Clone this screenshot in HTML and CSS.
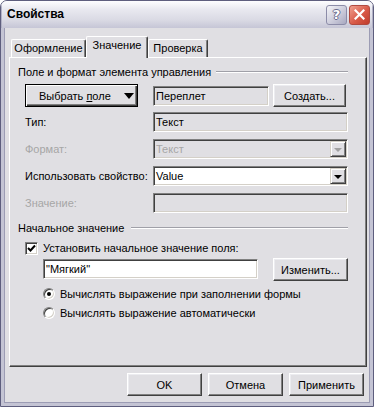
FILE: index.html
```html
<!DOCTYPE html>
<html>
<head>
<meta charset="utf-8">
<link rel="stylesheet" href="styles.css">
</head>
<body>

<div class="window">
  <div class="titlebar">
    <span class="title">Свойства</span>
    <span class="cap-btn help">?</span>
    <span class="cap-btn close">
      <svg width="11" height="11" viewBox="0 0 11 11"><path d="M1.5 1.5 L9.5 9.5 M9.5 1.5 L1.5 9.5" stroke="#fff" stroke-width="2.2" stroke-linecap="square"/></svg>
    </span>
  </div>

  <div class="client">
    <div class="tabs">
      <div class="tab t1">Оформление</div>
      <div class="tab t2 active">Значение</div>
      <div class="tab t3">Проверка</div>
    </div>

    <div class="panel">
      <div class="group-title">Поле и формат элемента управления</div>

      <div class="row first">
        <div class="btn default pick"><span>Выбрать <u>п</u>оле</span><span class="arrow"></span></div>
        <div class="field ro w-short">Переплет</div>
        <div class="btn create">Создать...</div>
      </div>

      <div class="row">
        <label class="lbl">Тип:</label>
        <div class="field ro grow">Текст</div>
      </div>

      <div class="row gap">
        <label class="lbl off">Формат:</label>
        <div class="field ro combo grow off"><span class="val">Текст</span><span class="drop"><span class="tri"></span></span></div>
      </div>

      <div class="row gap">
        <label class="lbl">Использовать свойство:</label>
        <div class="field combo grow white"><span class="val">Value</span><span class="drop"><span class="tri"></span></span></div>
      </div>

      <div class="row gap">
        <label class="lbl off">Значение:</label>
        <div class="field ro grow"></div>
      </div>

      <div class="group-title second">Начальное значение</div>

      <div class="check-row">
        <span class="checkbox"><svg width="9" height="9" viewBox="0 0 9 9"><path d="M1 4 L3.5 6.5 L8 1.5" stroke="#000" stroke-width="2" fill="none"/></svg></span>
        <span>Установить начальное значение поля:</span>
      </div>

      <div class="row value-row">
        <div class="field white w-value">"Мягкий"</div>
        <div class="btn change">Изменить...</div>
      </div>

      <div class="radio-row r1">
        <span class="radio on"></span>
        <span>Вычислять выражение при заполнении формы</span>
      </div>
      <div class="radio-row r2">
        <span class="radio"></span>
        <span>Вычислять выражение автоматически</span>
      </div>
    </div>

    <div class="actions">
      <div class="btn">OK</div>
      <div class="btn">Отмена</div>
      <div class="btn">Применить</div>
    </div>
  </div>
</div>

</body>
</html>
```

FILE: styles.css
```css
* {box-sizing: border-box;}
body {margin: 0; font-family: "Liberation Sans", Arial, sans-serif; font-size: 11px; color: #000; background: #fff;}

.window {
  width: 374px;
  height: 407px;
  border: 1px solid #5e5e7e;
  border-radius: 7px 7px 0 0;
  background: #e0dfe3;
  overflow: hidden;
  display: flex;
  flex-direction: column;
}

.titlebar {
  height: 27px;
  flex: none;
  display: flex;
  align-items: center;
  padding: 0 3px 0 6px;
  background: linear-gradient(#fdfdff, #e9e9f0 30%, #dadae4 70%, #c6c6d6);
  box-shadow: inset 1px 0 #b2b2c6, inset -1px 0 #b2b2c6;
}

.title {
  flex: 1;
  font-size: 12px;
  font-weight: bold;
  padding-bottom: 1px;
}

.cap-btn {
  width: 21px;
  height: 20px;
  border-radius: 3px;
  display: flex;
  align-items: center;
  justify-content: center;
  margin-left: 2px;
}

.help {
  border: 1px solid #8c8ca8;
  background: linear-gradient(135deg, #f4f4f8, #c8c8d8 60%, #a8a8c0);
  color: #fff;
  font-family: "DejaVu Sans", sans-serif;
  font-size: 13px;
  font-weight: bold;
  text-shadow: 1px 0 #6a6a8c, -1px 0 #6a6a8c, 0 1px #6a6a8c, 0 -1px #6a6a8c;
}

.close {
  border: 1px solid #b04a40;
  background: linear-gradient(135deg, #f0a090, #d85a48 55%, #c03c2c);
}

.client {
  flex: 1;
  padding: 8px 0 0 5px;
  border: solid #c4c4d4;
  border-width: 0 3px 3px 3px;
  box-shadow: inset 1px 0 #9c9cb4, inset -1px 0 #9c9cb4, inset 0 -1px #9c9cb4;
}

/* tabs */
.tabs {
  display: flex;
  align-items: flex-end;
  height: 21px;
  padding-left: 2px;
  position: relative;
  z-index: 1;
}

.tab {
  height: 18px;
  border: 1px solid;
  border-bottom: none;
  border-color: #fff #404040 #fff #fff;
  box-shadow: inset -1px 0 #808080;
  border-radius: 2px 2px 0 0;
  text-align: center;
  line-height: 16px;
  background: #e0dfe3;
}
.t1 {width: 75px;}
.t2 {width: 62px;}
.t3 {width: 60px;}
.tab.active {height: 22px; margin-bottom: -1px;}

/* page */
.panel {
  width: 358px;
  height: 310px;
  border: 1px solid;
  border-color: #fff #404040 #404040 #fff;
  box-shadow: inset -1px -1px #808080;
  padding: 0 18px 0 15px;
}

.group-title {
  display: flex;
  align-items: center;
  height: 14px;
  margin: 7px 0 0 -7px;
}
.group-title::after {
  content: "";
  flex: 1;
  margin-left: 5px;
  border-top: 1px solid #a0a0a8;
  border-bottom: 1px solid #fff;
}
.group-title.second {margin-top: 8px;}
.group-title.second::after {margin-left: 7px;}

.row {
  display: flex;
  align-items: center;
  margin-top: 5px;
}
.row.gap {margin-top: 7px;}
.row.first {height: 23px;}

.lbl {width: 128px; flex: none;}
.off {color: #a6a6a6;}

.field {
  height: 20px;
  border: 1px solid;
  border-color: #808080 #fff #fff #808080;
  box-shadow: inset 1px 1px #404040, inset -1px -1px #d4d0c8;
  padding: 0 2px;
  line-height: 18px;
  white-space: nowrap;
  overflow: hidden;
}
.field.white {background: #fff;}
.grow {flex: 1;}
.w-short {width: 116px; margin: 0 4px 0 15px;}

.combo {display: flex; padding-right: 1px;}
.combo .val {flex: 1;}
.drop {
  width: 16px;
  height: 16px;
  margin-top: 1px;
  border: 1px solid;
  border-color: #d4d0c8 #404040 #404040 #d4d0c8;
  box-shadow: inset 1px 1px #fff, inset -1px -1px #808080;
  background: #e0dfe3;
  display: flex;
  align-items: center;
  justify-content: center;
}
.tri {
  width: 0;
  height: 0;
  border-left: 4px solid transparent;
  border-right: 4px solid transparent;
  border-top: 4px solid #000;
  margin-top: 1px;
}
.off .tri {border-top-color: #a0a0a0;}

/* buttons */
.btn {
  height: 23px;
  width: 75px;
  border: 1px solid;
  border-color: #fff #404040 #404040 #fff;
  box-shadow: inset -1px -1px #808080, inset 1px 1px #ececf0;
  background: #e0dfe3;
  display: flex;
  align-items: center;
  justify-content: center;
  flex: none;
}
.btn.default {
  border-color: #000;
  box-shadow: inset 1px 1px #fff, inset -1px -1px #404040, inset -2px -2px #808080;
}
.pick {width: 113px; justify-content: flex-start; padding-left: 13px;}
.pick u {text-decoration-thickness: 1px; text-underline-offset: 1px;}
.arrow {
  width: 0;
  height: 0;
  margin-left: 13px;
  border-left: 5px solid transparent;
  border-right: 5px solid transparent;
  border-top: 6px solid #000;
}
.create {width: 73px;}
.change {margin-left: auto;}

.check-row {
  display: flex;
  align-items: center;
  height: 14px;
  margin-top: 6px;
}
.checkbox {
  width: 13px;
  height: 13px;
  margin-right: 5px;
  border: 1px solid;
  border-color: #808080 #fff #fff #808080;
  box-shadow: inset 1px 1px #404040, inset -1px -1px #d4d0c8;
  background: #fff;
  display: flex;
  align-items: center;
  justify-content: center;
}

.value-row {margin-top: 3px; height: 23px; align-items: flex-start;}
.w-value {width: 215px; margin: 1px 0 0 18px; line-height: 18px;}

.radio-row {
  display: flex;
  align-items: center;
  height: 14px;
  padding-left: 18px;
  margin-top: 6px;
}
.radio-row.r2 {margin-top: 5px;}
.radio {
  width: 12px;
  height: 12px;
  margin-right: 5px;
  border-radius: 50%;
  border: 1px solid;
  border-color: #808080 #fff #fff #808080;
  box-shadow: inset 1px 1px #404040, inset -1px -1px #d4d0c8;
  background: #fff;
  display: flex;
  align-items: center;
  justify-content: center;
}
.radio.on::after {
  content: "";
  width: 4px;
  height: 4px;
  border-radius: 50%;
  background: #000;
}

.actions {
  display: flex;
  justify-content: flex-end;
  gap: 6px;
  width: 358px;
  padding-right: 3px;
  margin-top: 6px;
}
```
